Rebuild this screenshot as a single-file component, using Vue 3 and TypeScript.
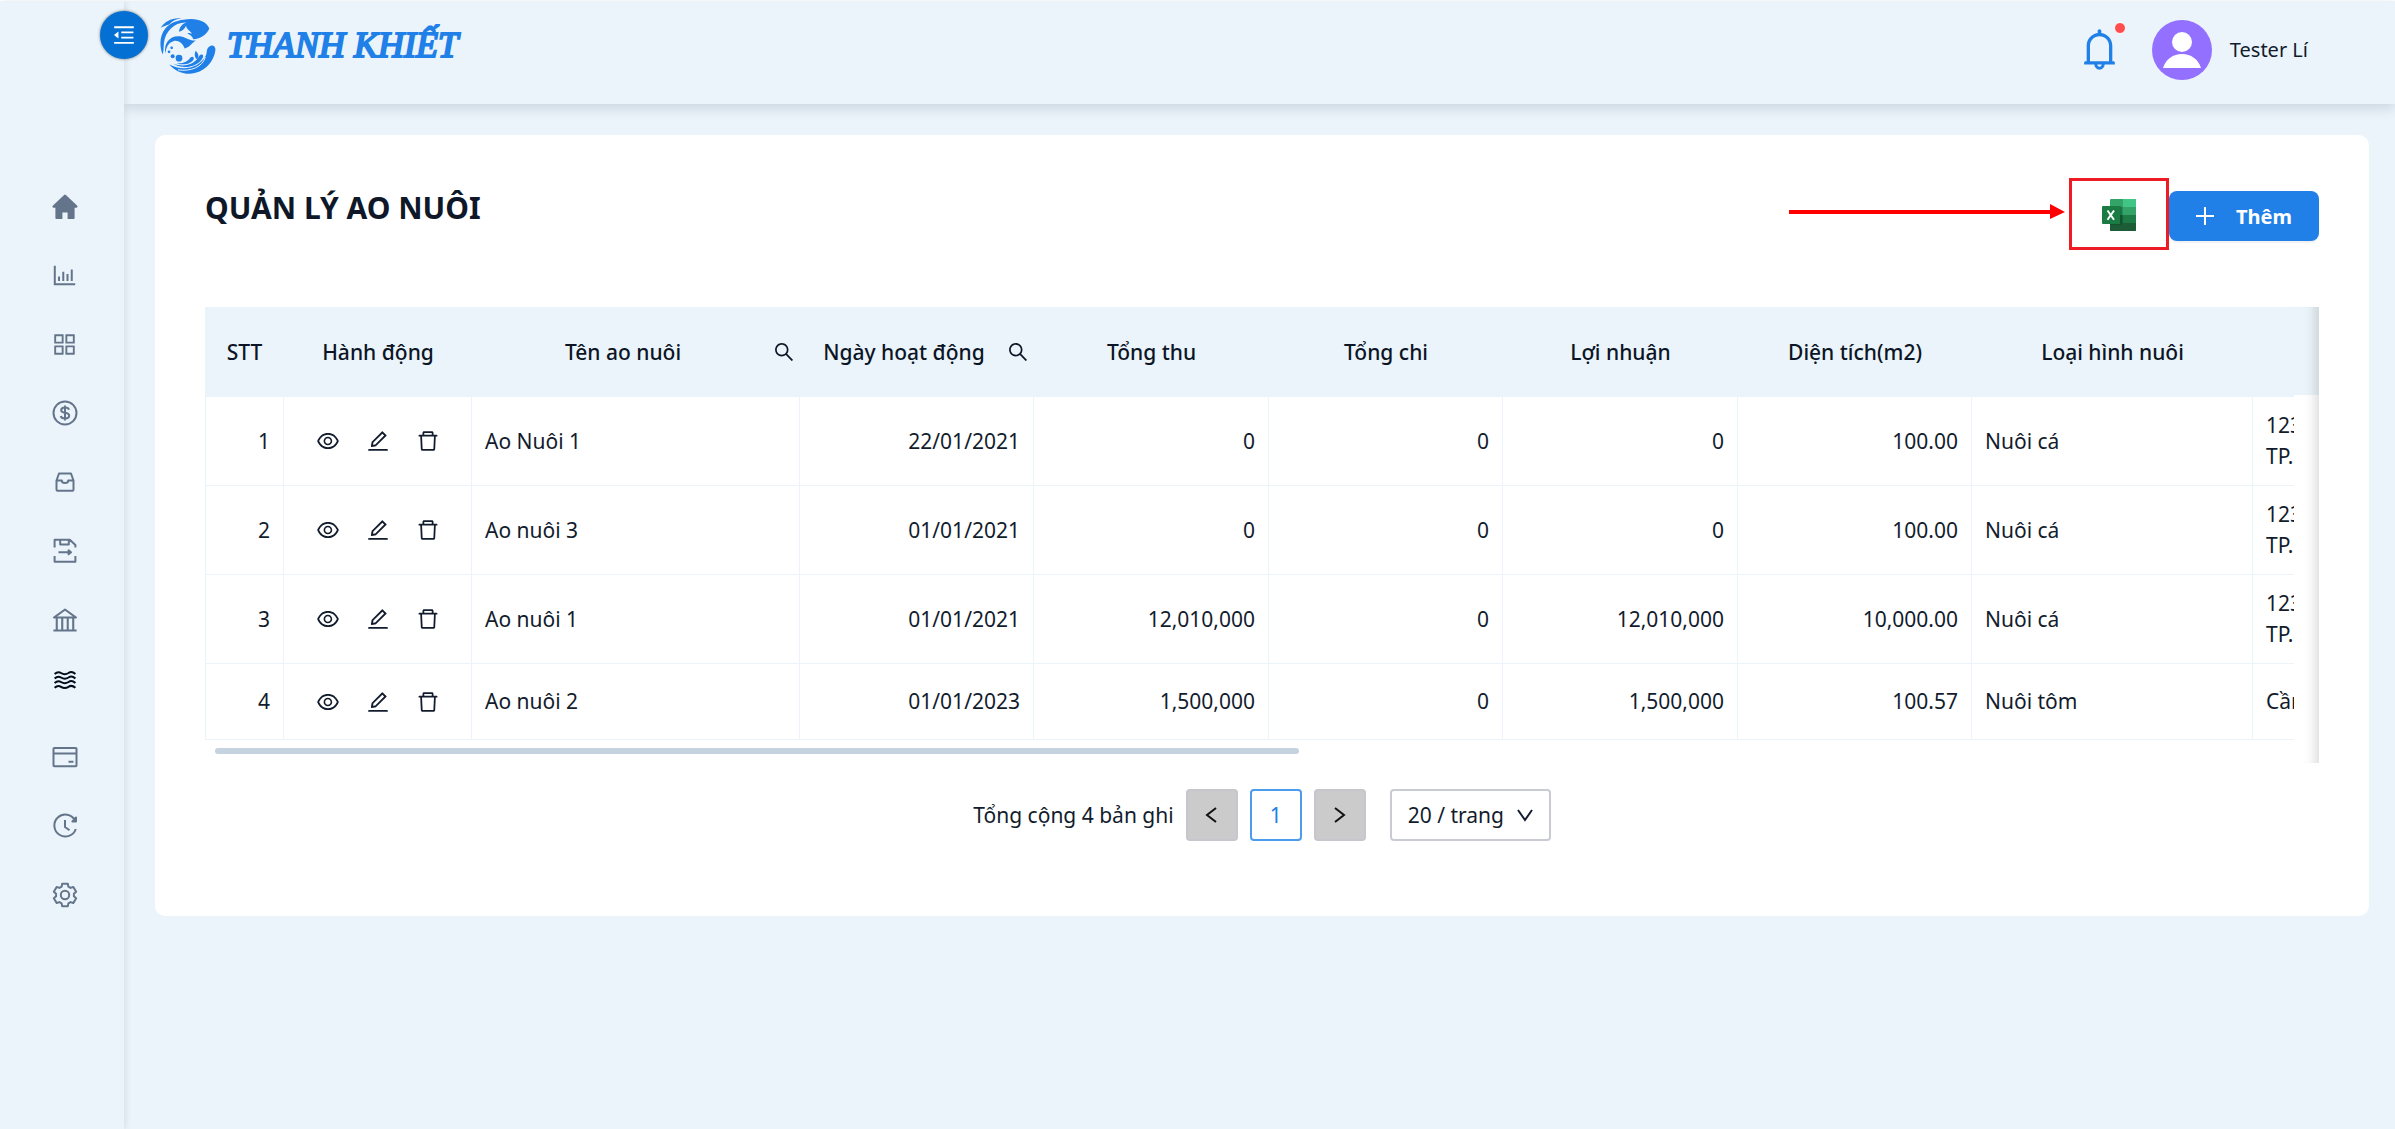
<script setup lang="ts">
import { ref } from 'vue'

interface Shape {
  d: string
  box: string
  stroke?: number
}

interface MenuItem {
  label: string
  icon: Shape
  size: number
  active?: boolean
}

interface Pond {
  name: string
  date: string
  income: string
  expense: string
  profit: string
  area: string
  kind: string
  address: string[]
}

const FILLED = '64 64 896 896'
const LINE = '0 0 26 26'

/* Outline of a six-toothed cog centred on (cx, cy). */
function cog(cx: number, cy: number, outer: number, inner: number): string {
  const points: string[] = []
  for (let tooth = 0; tooth < 6; tooth++) {
    const steps: [number, number][] = [[-22, inner], [-14, outer], [14, outer], [22, inner]]
    for (const [shift, radius] of steps) {
      const angle = ((tooth * 60 - 90 + shift) * Math.PI) / 180
      points.push(`${(cx + radius * Math.cos(angle)).toFixed(2)} ${(cy + radius * Math.sin(angle)).toFixed(2)}`)
    }
  }
  return `M${points.join('L')}Z`
}

const menu: MenuItem[] = [
  { label: 'Trang chủ', size: 26, icon: { box: LINE, d: 'M12.1.9a1.3 1.3 0 0 1 1.8 0L25 11.6c1 1 .6 2.2-.8 2.2H22.600V24c0 .6-.4 1-1 1h-6v-6.500h-5.200V25h-6c-.6 0-1-.4-1-1V13.800H1.800C.4 13.800 0 12.600 1 11.600Z' } },
  { label: 'Thống kê', size: 25, icon: { box: FILLED, d: 'M888 792H200V168c0-4.400-3.600-8-8-8h-56c-4.400 0-8 3.600-8 8v688c0 4.400 3.600 8 8 8h752c4.400 0 8-3.600 8-8v-56c0-4.400-3.600-8-8-8zm-600-80h56c4.400 0 8-3.600 8-8V560c0-4.400-3.600-8-8-8h-56c-4.400 0-8 3.600-8 8v144c0 4.400 3.600 8 8 8zm152 0h56c4.400 0 8-3.600 8-8V384c0-4.400-3.600-8-8-8h-56c-4.400 0-8 3.600-8 8v320c0 4.400 3.600 8 8 8zm152 0h56c4.400 0 8-3.600 8-8V462c0-4.400-3.600-8-8-8h-56c-4.400 0-8 3.600-8 8v242c0 4.400 3.600 8 8 8zm152 0h56c4.400 0 8-3.600 8-8V304c0-4.400-3.600-8-8-8h-56c-4.400 0-8 3.600-8 8v400c0 4.400 3.600 8 8 8z' } },
  { label: 'Danh mục', size: 25, icon: { box: FILLED, d: 'M464 144H160c-8.800 0-16 7.200-16 16v304c0 8.800 7.200 16 16 16h304c8.800 0 16-7.200 16-16V160c0-8.800-7.200-16-16-16zm-52 268H212V212h200v200zm452-268H560c-8.800 0-16 7.200-16 16v304c0 8.800 7.200 16 16 16h304c8.800 0 16-7.200 16-16V160c0-8.800-7.200-16-16-16zm-52 268H612V212h200v200zM464 544H160c-8.800 0-16 7.200-16 16v304c0 8.800 7.200 16 16 16h304c8.800 0 16-7.200 16-16V560c0-8.800-7.200-16-16-16zm-52 268H212V612h200v200zm452-268H560c-8.800 0-16 7.200-16 16v304c0 8.800 7.200 16 16 16h304c8.800 0 16-7.200 16-16V560c0-8.800-7.200-16-16-16zm-52 268H612V612h200v200z' } },
  { label: 'Thu chi', size: 26, icon: { box: LINE, stroke: 2, d: 'M13 1.500a11.500 11.500 0 1 0 0 23a11.500 11.500 0 1 0 0-23ZM17 9.800C16.700 8.300 15.300 7.600 13 7.600C10.700 7.600 9.200 8.500 9.200 10.200C9.200 14 17.200 11.500 17.200 15.800C17.200 17.600 15.600 18.500 13 18.500C10.500 18.500 9.100 17.600 8.800 16M13 5.600V20.400' } },
  { label: 'Kho', size: 26, icon: { box: LINE, stroke: 2, d: 'M4.500 11.500L7 4.500H19L21.500 11.500V20.500C21.500 21.300 21 21.700 20.500 21.700H5.500C5 21.700 4.500 21.300 4.500 20.500ZM4.500 11.500H9.800A3.200 2.600 0 0 0 16.200 11.500H21.500' } },
  { label: 'Xuất kho', size: 26, icon: { box: LINE, stroke: 2, d: 'M2.600 9.500V1.800H17.800L23.400 7V9.500M8.200 2V6.500H16.800V2M2.600 18V23.800H23.400V18M6.500 14.300H18M16.600 12.300L19 14.300L16.600 16.300Z' } },
  { label: 'Ngân hàng', size: 26, icon: { box: FILLED, d: 'M894 462c30.900 0 43.800-39.700 18.700-58L530.800 126.200a31.810 31.810 0 0 0-37.600 0L111.300 404c-25.100 18.200-12.200 58 18.800 58H192v374h-72c-4.400 0-8 3.600-8 8v52c0 4.400 3.600 8 8 8h784c4.400 0 8-3.600 8-8v-52c0-4.400-3.600-8-8-8h-72V462h62zM512 196.700l271.100 197.200H240.900L512 196.700zM264 462h117v374H264V462zm189 0h117v374H453V462zm307 374H642V462h118v374z' } },
  { label: 'Ao nuôi', size: 26, active: true, icon: { box: '0 2 26 26', stroke: 2, d: 'M2.600 7C5 4.800 7.200 4.800 9 6C11.500 7.600 14 7.600 16.500 6C18.500 4.600 21 4.800 23.400 7M2.600 11.500C5 9.300 7.200 9.300 9 10.500C11.500 12.100 14 12.100 16.500 10.500C18.500 9.100 21 9.300 23.400 11.500M2.600 16C5 13.800 7.200 13.800 9 15C11.500 16.600 14 16.600 16.500 15C18.500 13.600 21 13.800 23.400 16M2.600 20.800C5 18.600 7.200 18.600 9 19.800C11.500 21.400 14 21.400 16.500 19.800C18.500 18.400 21 18.600 23.400 20.800' } },
  { label: 'Thẻ', size: 26, icon: { box: LINE, stroke: 2, d: 'M2.300 4H23.700C24.200 4 24.500 4.300 24.500 4.800V21.500C24.500 22 24.200 22.300 23.700 22.300H2.300C1.800 22.300 1.500 22 1.500 21.500V4.800C1.500 4.300 1.800 4 2.300 4ZM1.500 9.600H24.500M16.500 17.800H21.500' } },
  { label: 'Lịch sử', size: 26, icon: { box: LINE, stroke: 2, d: 'M23 7.200A11 11 0 1 0 23.800 16M24 4.500V8.400H20.400ZM13 7V14L17.500 17.200' } },
  { label: 'Cài đặt', size: 26, icon: { box: LINE, stroke: 2, d: `${cog(13, 13, 11.6, 9)}M13 8.800a4.200 4.200 0 1 0 0 8.400a4.200 4.200 0 1 0 0-8.400Z` } },
]

const actions = [
  { label: 'Xem', d: 'M942.200 486.200C847.400 286.500 704.100 186 512 186c-192.200 0-335.400 100.500-430.200 300.300a60.300 60.300 0 0 0 0 51.500C176.600 737.500 319.900 838 512 838c192.200 0 335.400-100.500 430.200-300.300 7.700-16.200 7.700-35 0-51.500zM512 766c-161.300 0-279.400-81.800-362.700-254C232.600 339.800 350.700 258 512 258c161.300 0 279.400 81.800 362.700 254C791.500 684.200 673.400 766 512 766zm-4-430c-97.200 0-176 78.800-176 176s78.800 176 176 176 176-78.800 176-176-78.800-176-176-176zm0 288c-61.900 0-112-50.100-112-112s50.100-112 112-112 112 50.100 112 112-50.100 112-112 112z' },
  { label: 'Sửa', d: 'M257.700 752c2 0 4-.2 6-.5L431.900 722c2-.4 3.900-1.300 5.300-2.800l423.900-423.900a9.960 9.960 0 0 0 0-14.100L694.900 114.900c-1.900-1.900-4.400-2.900-7.100-2.900s-5.200 1-7.100 2.900L256.800 538.800c-1.500 1.500-2.400 3.300-2.800 5.300l-29.500 168.200a33.500 33.500 0 0 0 9.400 29.800c6.600 6.400 14.900 9.900 23.800 9.900zm67.400-174.400L687.800 215l73.300 73.300-362.700 362.600-88.900 15.700 15.600-89zM880 836H144c-17.700 0-32 14.300-32 32v36c0 4.400 3.600 8 8 8h784c4.400 0 8-3.600 8-8v-36c0-17.700-14.300-32-32-32z' },
  { label: 'Xóa', d: 'M360 184h-8c4.400 0 8-3.600 8-8v8h304v-8c0 4.400 3.600 8 8 8h-8v72h72v-80c0-35.300-28.700-64-64-64H352c-35.300 0-64 28.700-64 64v80h72v-72zm504 72H160c-17.700 0-32 14.300-32 32v32c0 4.400 3.600 8 8 8h60.400l24.700 523c1.600 34.100 29.800 61 63.900 61h454c34.200 0 62.300-26.800 63.900-61l24.700-523H888c4.400 0 8-3.600 8-8v-32c0-17.700-14.300-32-32-32zM731.300 840H292.700l-24.200-512h487l-24.200 512z' },
]

const columns = [
  { title: 'STT', width: 79 },
  { title: 'Hành động', width: 188 },
  { title: 'Tên ao nuôi', width: 328, search: true },
  { title: 'Ngày hoạt động', width: 234, search: true },
  { title: 'Tổng thu', width: 235 },
  { title: 'Tổng chi', width: 234 },
  { title: 'Lợi nhuận', width: 235 },
  { title: 'Diện tích(m2)', width: 234 },
  { title: 'Loại hình nuôi', width: 281 },
  { title: '', width: 281 },
]

const ponds: Pond[] = [
  { name: 'Ao Nuôi 1', date: '22/01/2021', income: '0', expense: '0', profit: '0', area: '100.00', kind: 'Nuôi cá', address: ['123', 'TP.'] },
  { name: 'Ao nuôi 3', date: '01/01/2021', income: '0', expense: '0', profit: '0', area: '100.00', kind: 'Nuôi cá', address: ['123', 'TP.'] },
  { name: 'Ao nuôi 1', date: '01/01/2021', income: '12,010,000', expense: '0', profit: '12,010,000', area: '10,000.00', kind: 'Nuôi cá', address: ['123', 'TP.'] },
  { name: 'Ao nuôi 2', date: '01/01/2023', income: '1,500,000', expense: '0', profit: '1,500,000', area: '100.57', kind: 'Nuôi tôm', address: ['Cần'] },
]

const pageSize = ref('20')
</script>

<template>
  <div class="shell">
    <aside class="sidebar">
      <nav class="menu" aria-label="Menu">
        <a v-for="item in menu" :key="item.label" href="#" class="menu-item" :class="{ active: item.active }" :aria-label="item.label">
          <svg
            :width="item.size"
            :height="item.size"
            :viewBox="item.icon.box"
            :fill="item.icon.stroke ? 'none' : 'currentColor'"
            :stroke="item.icon.stroke ? 'currentColor' : 'none'"
            :stroke-width="item.icon.stroke"
            stroke-linejoin="round"
          >
            <path :d="item.icon.d" />
          </svg>
        </a>
      </nav>
      <button type="button" class="collapse" aria-label="Thu gọn menu">
        <svg width="22" height="22" viewBox="64 64 896 896" fill="currentColor">
          <path d="M408 442h480c4.400 0 8-3.600 8-8v-56c0-4.400-3.600-8-8-8H408c-4.400 0-8 3.600-8 8v56c0 4.400 3.600 8 8 8zm-8 204c0 4.400 3.600 8 8 8h480c4.400 0 8-3.600 8-8v-56c0-4.400-3.600-8-8-8H408c-4.400 0-8 3.600-8 8v56zm504-486H120c-4.400 0-8 3.600-8 8v56c0 4.400 3.600 8 8 8h784c4.400 0 8-3.600 8-8v-56c0-4.400-3.600-8-8-8zm0 632H120c-4.400 0-8 3.600-8 8v56c0 4.400 3.600 8 8 8h784c4.400 0 8-3.600 8-8v-56c0-4.400-3.600-8-8-8zM115.400 518.900L271.700 642c5.800 4.600 14.400.5 14.400-6.900V388.900c0-7.400-8.500-11.500-14.400-6.900L115.400 505.100a8.740 8.740 0 0 0 0 13.800z" />
        </svg>
      </button>
    </aside>

    <div class="page">
      <header class="topbar">
        <a href="#" class="brand">
          <svg class="brand-mark" width="56" height="57" viewBox="30 36 168 170" fill="currentColor" aria-hidden="true">
            <path d="M32 68C44 50 66 37 94 40C76 42 66 48 58 58C50 60 40 64 32 68Z" />
            <path d="M100 44C134 36 170 46 178 70C170 88 152 102 130 102C128 94 120 88 112 84C118 82 122 84 126 86C122 78 110 74 108 62C104 72 96 78 87 80C88 66 96 56 110 52C74 50 46 78 42 112C40 126 42 136 38 148C28 124 28 92 46 70C60 54 80 46 100 44Z" />
            <path d="M46 146C40 112 62 88 94 94C112 98 118 108 138 106C126 112 120 126 104 130C98 114 84 104 70 108C56 112 48 126 46 146Z" />
            <circle cx="65" cy="128" r="4" />
            <circle cx="57" cy="140" r="4" />
            <circle cx="68" cy="153" r="6" />
            <circle cx="87" cy="159" r="10" />
            <path d="M137 137C145 144 148 154 142 162C134 160 132 148 137 137Z" />
            <path d="M80 174C100 176 114 168 122 156C128 152 133 156 131 162C124 176 100 182 80 174Z" />
            <path d="M70 176C104 188 134 178 148 152C154 144 162 148 159 156C148 182 104 196 70 176Z" />
            <path d="M58 178C98 200 150 188 168 150C172 140 168 132 178 124C188 116 198 124 196 136C192 168 164 204 118 206C92 206 72 194 58 178Z" />
            <path d="M84 194C124 200 158 184 166 156" fill="none" stroke="#ebf4fa" stroke-width="3" />
          </svg>
          <span class="brand-name">THANH KHIẾT</span>
        </a>
        <div class="account">
          <button type="button" class="bell" aria-label="Thông báo">
            <svg width="41" height="41" viewBox="64 64 896 896" fill="currentColor">
              <path d="M816 768h-24V428c0-141.100-104.300-257.700-240-277.100V112c0-22.100-17.900-40-40-40s-40 17.900-40 40v38.900c-135.700 19.400-240 136-240 277.100v340h-24c-17.700 0-32 14.300-32 32v32c0 4.400 3.600 8 8 8h216c0 61.800 50.200 112 112 112s112-50.200 112-112h216c4.400 0 8-3.600 8-8v-32c0-17.700-14.300-32-32-32zM512 888c-26.500 0-48-21.500-48-48h96c0 26.500-21.500 48-48 48zM304 768V428c0-55.600 21.600-107.800 60.900-147.100S456.400 220 512 220c55.600 0 107.800 21.600 147.100 60.900S720 372.400 720 428v340H304z" />
            </svg>
            <span class="dot"></span>
          </button>
          <svg class="avatar" width="60" height="60" viewBox="0 0 60 60" aria-hidden="true">
            <circle cx="30" cy="30" r="30" fill="#9370ff" />
            <circle cx="30" cy="22" r="10" fill="#fff" />
            <path d="M11 48C14 39 21 34 30 34S46 39 49 48Z" fill="#fff" />
          </svg>
          <span class="user">Tester Lí</span>
        </div>
      </header>

      <main class="card">
        <div class="card-head">
          <h1>QUẢN LÝ AO NUÔI</h1>
          <div class="tools">
            <svg class="pointer" width="280" height="72" viewBox="0 0 280 72" fill="#f00" aria-hidden="true">
              <path d="M0 32H261V26L276 34L261 41V36H0Z" />
            </svg>
            <button type="button" class="excel" aria-label="Xuất Excel">
              <svg width="34" height="32" viewBox="0 0 34 32">
                <rect x="8" width="26" height="32" rx="1" fill="#33a367" />
                <path d="M21 0H33Q34 0 34 1V8H21Z" fill="#41c686" />
                <path d="M8 8H21V16H8Z" fill="#21915a" />
                <path d="M8 16H21V24H8Z" fill="#165c38" />
                <path d="M21 16H34V24H21Z" fill="#1d7c45" />
                <path d="M8 24H34V31Q34 32 33 32H9Q8 32 8 31Z" fill="#1c5c36" />
                <path d="M8 7H18Q20 7 20 9V26H8Z" fill="#0a3f25" opacity=".35" />
                <rect y="7" width="18" height="18" rx="1" fill="#1a7c43" />
                <path d="M5.500 11.500L12 20.800M12 11.500L5.500 20.800" stroke="#fff" stroke-width="2" />
              </svg>
            </button>
            <button type="button" class="add">
              <svg width="18" height="18" viewBox="0 0 18 18" fill="none" stroke="currentColor" stroke-width="2" aria-hidden="true">
                <path d="M9 0V18M0 9H18" />
              </svg>
              <span>Thêm</span>
            </button>
          </div>
        </div>

        <div class="table-frame">
          <div class="scroller">
            <table>
              <colgroup>
                <col v-for="(column, index) in columns" :key="index" :style="{ width: column.width + 'px' }" />
              </colgroup>
              <thead>
                <tr>
                  <th v-for="(column, index) in columns" :key="index" scope="col" :class="{ searchable: column.search }">
                    <div v-if="column.search" class="th-search">
                      <span>{{ column.title }}</span>
                      <button type="button" :aria-label="'Tìm ' + column.title">
                        <svg width="20" height="20" viewBox="64 64 896 896" fill="currentColor">
                          <path d="M909.600 854.500L649.900 594.800C690.200 542.700 712 479 712 412c0-80.200-31.300-155.400-87.900-212.100-56.600-56.700-132-87.900-212.100-87.900s-155.500 31.300-212.100 87.900C143.200 256.500 112 331.800 112 412c0 80.100 31.300 155.500 87.900 212.100C256.500 680.800 331.800 712 412 712c67 0 130.600-21.800 182.700-62l259.700 259.600a8.200 8.200 0 0 0 11.600 0l43.600-43.500a8.200 8.200 0 0 0 0-11.600zM570.400 570.400C528 612.700 471.800 636 412 636s-116-23.300-158.400-65.600C211.300 528 188 471.800 188 412s23.300-116.100 65.600-158.400C296 211.300 352.200 188 412 188s116.100 23.200 158.400 65.600S636 352.200 636 412s-23.300 116.100-65.600 158.400z" />
                        </svg>
                      </button>
                    </div>
                    <template v-else>{{ column.title }}</template>
                  </th>
                </tr>
              </thead>
              <tbody>
                <tr v-for="(pond, index) in ponds" :key="index">
                  <td class="num">{{ index + 1 }}</td>
                  <td>
                    <div class="row-actions">
                      <button v-for="action in actions" :key="action.label" type="button" :aria-label="action.label + ' ' + pond.name">
                        <svg width="22" height="22" viewBox="64 64 896 896" fill="currentColor"><path :d="action.d" /></svg>
                      </button>
                    </div>
                  </td>
                  <td>{{ pond.name }}</td>
                  <td class="num">{{ pond.date }}</td>
                  <td class="num">{{ pond.income }}</td>
                  <td class="num">{{ pond.expense }}</td>
                  <td class="num">{{ pond.profit }}</td>
                  <td class="num">{{ pond.area }}</td>
                  <td>{{ pond.kind }}</td>
                  <td><div v-for="line in pond.address" :key="line">{{ line }}</div></td>
                </tr>
              </tbody>
            </table>
            <div class="track"><div class="thumb"></div></div>
          </div>
          <div class="gutter"></div>
        </div>

        <nav class="pagination" aria-label="Phân trang">
          <span>Tổng cộng 4 bản ghi</span>
          <button type="button" class="step" aria-label="Trang trước">
            <svg width="16" height="18" viewBox="0 0 16 18" fill="none" stroke="currentColor" stroke-width="2"><path d="M12 2L3 9L12 16" /></svg>
          </button>
          <button type="button" class="current" aria-current="page">1</button>
          <button type="button" class="step" aria-label="Trang sau">
            <svg width="16" height="18" viewBox="0 0 16 18" fill="none" stroke="currentColor" stroke-width="2"><path d="M3 2L12 9L3 16" /></svg>
          </button>
          <div class="size">
            <select v-model="pageSize" aria-label="Số bản ghi mỗi trang">
              <option value="20">20 / trang</option>
            </select>
            <svg width="16" height="14" viewBox="0 0 16 14" fill="none" stroke="currentColor" stroke-width="2" aria-hidden="true"><path d="M1 1L8 11L15 1" /></svg>
          </div>
        </nav>
      </main>
    </div>
  </div>
</template>

<style>
body {
  background: #ebf4fa;
}
</style>

<style scoped>
.shell {
  display: flex;
  min-height: 100vh;
  box-sizing: border-box;
  border-top: 1px solid #fff;
  background: #ebf4fa;
  color: #121c2d;
  font-family: 'Noto Sans', 'Open Sans', sans-serif;
  font-size: 21px;
  line-height: 31px;
}

button {
  border: 0;
  padding: 0;
  background: none;
  color: inherit;
  font: inherit;
}

svg {
  display: block;
}

.sidebar {
  position: relative;
  z-index: 2;
  flex: none;
  width: 124px;
  background: #ebf4fa;
  box-shadow: 2px 0 6px rgba(40, 60, 90, 0.1);
}

.menu {
  display: flex;
  flex-direction: column;
  align-items: center;
  justify-content: space-between;
  height: 728px;
  margin-top: 186px;
  padding-left: 5px;
}

.menu-item {
  display: flex;
  align-items: center;
  height: 40px;
  color: #64748b;
}

.menu-item.active {
  align-items: flex-start;
  color: #020c1c;
}

.collapse {
  position: absolute;
  top: 10px;
  right: -24px;
  display: flex;
  align-items: center;
  justify-content: center;
  width: 48px;
  height: 48px;
  border-radius: 50%;
  background: #0470d3;
  box-shadow: 0 0 3px rgba(0, 0, 0, 0.5);
  color: #fff;
}

.page {
  flex: 1;
  min-width: 0;
}

.topbar {
  display: flex;
  align-items: center;
  justify-content: space-between;
  height: 103px;
  box-sizing: border-box;
  padding: 0 87px 6px 36px;
  box-shadow: 0 4px 12px rgba(30, 50, 80, 0.16);
}

.brand {
  display: flex;
  align-items: center;
  gap: 11px;
  padding-bottom: 8px;
  color: #2080e8;
  text-decoration: none;
}

.brand-name {
  font-family: 'Liberation Serif', serif;
  font-size: 36px;
  font-style: italic;
  -webkit-text-stroke: 2px #2080e8;
}

.account {
  display: flex;
  align-items: center;
}

.bell {
  position: relative;
  margin-right: 32px;
  color: #2080e8;
}

.dot {
  position: absolute;
  top: -7px;
  right: -6px;
  width: 10px;
  height: 10px;
  border: 1px solid #fff;
  border-radius: 50%;
  background: #ff4d4f;
}

.avatar {
  margin-right: 18px;
}

.user {
  font-size: 20px;
}

.card {
  margin: 31px 26px 0 31px;
  padding: 43px 50px 75px;
  border-radius: 10px;
  background: #fff;
}

.card-head {
  display: flex;
  align-items: flex-start;
  justify-content: space-between;
  height: 129px;
}

h1 {
  margin: 0;
  color: #0e1829;
  font-size: 30px;
  font-weight: 700;
  line-height: 60px;
}

.tools {
  display: flex;
}

.excel {
  display: flex;
  align-items: center;
  justify-content: center;
  box-sizing: border-box;
  width: 100px;
  height: 72px;
  padding-top: 2px;
  border: 3px solid #ed1c24;
}

.add {
  display: flex;
  align-items: center;
  justify-content: center;
  gap: 22px;
  width: 150px;
  height: 50px;
  margin-top: 13px;
  border-radius: 8px;
  background: #2080e8;
  box-shadow: 0 2px 2px rgba(0, 0, 0, 0.06);
  color: #fff;
  font-size: 20px;
  font-weight: 700;
}

.table-frame {
  position: relative;
  display: flex;
}

.table-frame::after {
  content: '';
  position: absolute;
  inset: 0 0 0 auto;
  width: 30px;
  box-shadow: inset -14px 0 12px -10px rgba(0, 0, 0, 0.14);
  pointer-events: none;
}

.scroller {
  flex: 1;
  min-width: 0;
  overflow: hidden;
}

.gutter {
  flex: none;
  width: 25px;
  height: 88px;
  background: #ebf4fa;
}

table {
  width: 2329px;
  border-collapse: separate;
  border-spacing: 0;
  table-layout: fixed;
}

th {
  height: 90px;
  padding: 0 12px;
  background: #ebf4fa;
  color: #0c1526;
  font-weight: 500;
}

th.searchable {
  padding-right: 0;
}

.th-search {
  display: flex;
  align-items: center;
}

.th-search span {
  flex: 1;
}

.th-search button {
  width: 38px;
  padding-left: 12px;
}

td {
  height: 76px;
  box-sizing: border-box;
  padding: 13px;
  border-right: 1px solid #ebf4fa;
  border-bottom: 1px solid #ebf4fa;
}

td:first-child {
  border-left: 1px solid #ebf4fa;
}

.num {
  text-align: right;
}

.row-actions {
  display: flex;
  justify-content: center;
  gap: 28px;
}

.track {
  padding: 8px 10px 9px;
}

.thumb {
  width: 52.4%;
  height: 6px;
  border-radius: 3px;
  background: #c5d3e0;
}

.pagination {
  display: flex;
  align-items: center;
  justify-content: center;
  gap: 12px;
  margin-top: 26px;
}

.step,
.current,
.size select {
  box-sizing: border-box;
  height: 52px;
  border: 2px solid #c8cbd2;
  border-radius: 4px;
}

.step,
.current {
  display: flex;
  align-items: center;
  justify-content: center;
  width: 52px;
}

.step {
  background: #cbcbcb;
  border-color: #c5c7cc;
  color: #111;
}

.current {
  border-color: #4c9bee;
  background: #fff;
  color: #2080e8;
}

.size {
  position: relative;
  margin-left: 12px;
}

.size select {
  width: 161px;
  padding: 0 16px;
  appearance: none;
  background: #fff;
  color: inherit;
  font: inherit;
}

.size svg {
  position: absolute;
  top: 20px;
  right: 18px;
  pointer-events: none;
}
</style>
